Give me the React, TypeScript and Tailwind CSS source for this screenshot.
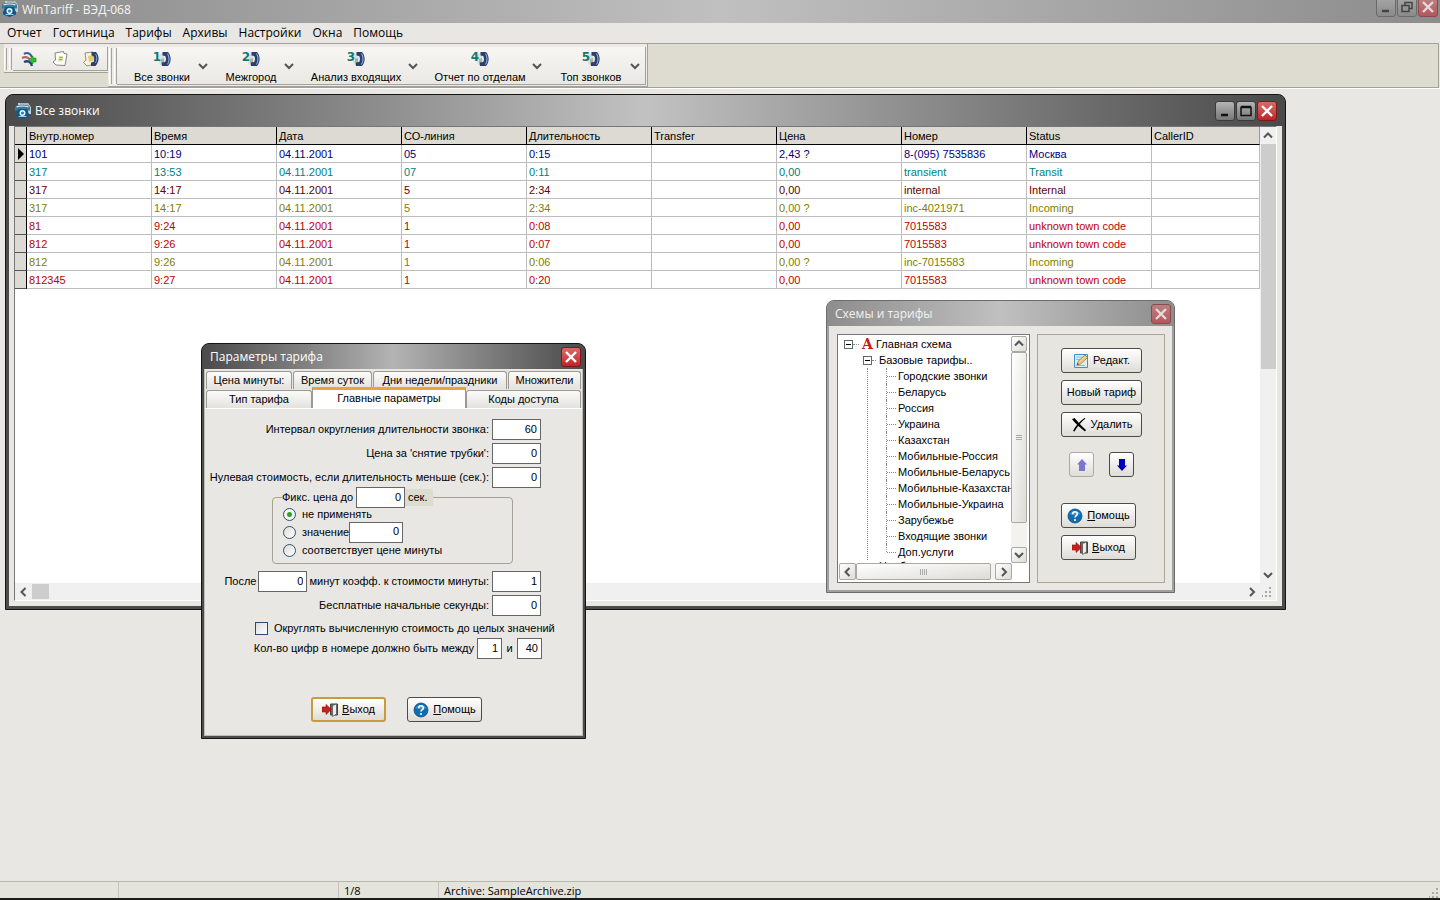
import { useState, type ReactNode } from "react";
import clsx from "clsx";

type Call = {
  color: string;
  cells: string[];
};

const menuItems = ["Отчет", "Гостиница", "Тарифы", "Архивы", "Настройки", "Окна", "Помощь"];

const reports = [
  { label: "Все звонки", width: "w-[66px]" },
  { label: "Межгород", width: "w-[60px]" },
  { label: "Анализ входящих", width: "w-[98px]" },
  { label: "Отчет по отделам", width: "w-[98px]" },
  { label: "Топ звонков", width: "w-[72px]" },
];

const columns = [
  "Внутр.номер",
  "Время",
  "Дата",
  "СО-линия",
  "Длительность",
  "Transfer",
  "Цена",
  "Номер",
  "Status",
  "CallerID",
];

const calls: Call[] = [
  { color: "text-[#000080]", cells: ["101", "10:19", "04.11.2001", "05", "0:15", "", "2,43 ?", "8-(095) 7535836", "Москва", ""] },
  { color: "text-[#008080]", cells: ["317", "13:53", "04.11.2001", "07", "0:11", "", "0,00", "transient", "Transit", ""] },
  { color: "text-[#600000]", cells: ["317", "14:17", "04.11.2001", "5", "2:34", "", "0,00", "internal", "Internal", ""] },
  { color: "text-[#808000]", cells: ["317", "14:17", "04.11.2001", "5", "2:34", "", "0,00 ?", "inc-4021971", "Incoming", ""] },
  { color: "text-[#c00000]", cells: ["81", "9:24", "04.11.2001", "1", "0:08", "", "0,00", "7015583", "unknown town code", ""] },
  { color: "text-[#c00000]", cells: ["812", "9:26", "04.11.2001", "1", "0:07", "", "0,00", "7015583", "unknown town code", ""] },
  { color: "text-[#808000]", cells: ["812", "9:26", "04.11.2001", "1", "0:06", "", "0,00 ?", "inc-7015583", "Incoming", ""] },
  { color: "text-[#c00000]", cells: ["812345", "9:27", "04.11.2001", "1", "0:20", "", "0,00", "7015583", "unknown town code", ""] },
];

const tariffs = [
  "Городские звонки",
  "Беларусь",
  "Россия",
  "Украина",
  "Казахстан",
  "Мобильные-Россия",
  "Мобильные-Беларусь",
  "Мобильные-Казахстан",
  "Мобильные-Украина",
  "Зарубежье",
  "Входящие звонки",
  "Доп.услуги",
];

/* ---------- icons ---------- */

function PhoneIcon() {
  return (
    <svg width="16" height="16" viewBox="0 0 16 16" aria-hidden="true">
      <path d="M3 0h10l3 4v7h-3V6H3z" fill="#c4cdd2" />
      <path d="M5 .8h7l2.500 3" stroke="#8f9ba2" strokeWidth=".8" fill="none" />
      <path d="M0 5c0-2.500 3-3.200 7.500-3.200S15 2.500 15 5v2.500h-4V6H4v1.500H0z" fill="#2b7ba6" />
      <path d="M1.500 4C4 2.600 11 2.600 13.500 4" stroke="#e2f4fb" strokeWidth="1.100" fill="none" />
      <path d="M3.500 6h8L14 11v2.500L7.500 16 1 13.500V11z" fill="#155488" />
      <circle cx="7.500" cy="10" r="3" fill="#e6f5fb" />
      <circle cx="7.500" cy="10" r="1.500" fill="#2f7ea8" />
      <path d="M3.500 13.500h8" stroke="#8fd0ea" />
    </svg>
  );
}

function RouteIcon() {
  return (
    <svg width="16" height="16" viewBox="0 0 16 16" aria-hidden="true">
      <path d="M3 3c3-2 6-1 8 3" stroke="#3c5f96" strokeWidth="2.200" fill="none" />
      <path d="M1 7c4-2 6-1 8 2" stroke="#b2685d" strokeWidth="2.200" fill="none" />
      <path d="M3 11c4-2 7 0 8 4" stroke="#27417c" strokeWidth="2.400" fill="none" />
      <path d="M8 8.500l4-3.500v2h3v4h-3v2z" fill="#2fbf2a" stroke="#16851a" strokeWidth=".6" />
    </svg>
  );
}

function NoteIcon() {
  return (
    <svg width="16" height="16" viewBox="0 0 16 16" aria-hidden="true">
      <path d="M3 2l8.500-1.500.5 2 3 .5-2 11.500-9-.5-3-3L3.500 9z" fill="#fdfdfa" stroke="#777" strokeWidth=".9" />
      <path d="M7 5h4v5l-5 1z" fill="#dce3a4" />
      <path d="M7.500 6.500h3M7 8.500h3" stroke="#8e9a4b" strokeWidth=".8" />
    </svg>
  );
}

function NotePhoneIcon() {
  return (
    <svg width="16" height="16" viewBox="0 0 16 16" aria-hidden="true">
      <path d="M2 2l8-1 2 12-8 2-3.500-3.500L3 9z" fill="#f8f3dd" stroke="#8c8468" strokeWidth=".9" />
      <path d="M5 5l5-1v6l-4 1z" fill="#e2c976" />
      <path d="M8.500 1H13c3.500 4 3.500 10-.5 14H8v-3.500l2.500-.5c1-2 1-4 0-6l-2-.5z" fill="#2b406f" />
      <path d="M12.500 3c1.700 2 1.700 6 0 9" stroke="#8aa7d8" fill="none" />
    </svg>
  );
}

function HandsetIcon() {
  return (
    <svg width="12" height="16" viewBox="0 0 12 16" aria-hidden="true">
      <path d="M0 4l5-3 1 12-3.500 2L0 12z" fill="#d8dfe6" />
      <path d="M2 8l3-1v6l-3 1z" fill="#a9b59a" />
      <path d="M3.500 1H9c3.500 4 3.500 10 0 14H3v-3.500l3.200-.5c1-2 1-4 0-6l-2.700-.5z" fill="#2b3f6b" />
      <path d="M8.500 2.500c2 3 2 8 0 11" stroke="#86a8da" strokeWidth="1.200" fill="none" />
    </svg>
  );
}

function HelpIcon() {
  return (
    <svg width="16" height="16" viewBox="0 0 16 16" aria-hidden="true">
      <circle cx="8" cy="8" r="7" fill="#0f6cb0" stroke="#0b4f86" strokeWidth=".8" />
      <path d="M2.500 6a6 5 0 0 1 11 0c-3 1.500-8 1.500-11 0z" fill="#4ea5dc" opacity=".7" />
      <path d="M5.700 6.200C5.700 3 10.400 3.100 10.400 5.900 10.400 7.600 8 7.700 8 9.600" stroke="#fff" strokeWidth="1.600" fill="none" />
      <circle cx="8" cy="12" r="1.100" fill="#fff" />
    </svg>
  );
}

function ExitIcon() {
  return (
    <svg width="16" height="14" viewBox="0 0 16 14" aria-hidden="true">
      <path d="M8.500 1h7v11h-7z" fill="#6d6d6d" stroke="#444" />
      <path d="M10.500 2.500l4-1.500v10l-4 2.500z" fill="#ececec" stroke="#555" strokeWidth=".8" />
      <path d="M0 4h4V1.500l5.500 5L4 11.500V9H0z" fill="#c9201c" stroke="#8b1210" strokeWidth=".6" />
    </svg>
  );
}

function EditIcon() {
  return (
    <svg width="16" height="16" viewBox="0 0 16 16" aria-hidden="true">
      <path d="M1.500 1.500h13v13h-13z" fill="#d9edfb" stroke="#3e8fd0" />
      <path d="M3 4h6M3 6.500h4M3 12.500h9" stroke="#8fbde0" />
      <path d="M4 12l1-3.500L12 2l2.500 2.500L7.500 11z" fill="#ecd08a" stroke="#8f7436" strokeWidth=".8" />
      <path d="M4 12l.6-2 1.400 1.300z" fill="#514429" />
    </svg>
  );
}

function DeleteIcon() {
  return (
    <svg width="16" height="14" viewBox="0 0 16 14" aria-hidden="true">
      <path d="M1 1.200L3.500 0C7 4 11 8.500 15 12l-1 1.500C9.500 10 5 6 1 1.200z" fill="#000" />
      <path d="M14.500.5C10 4 6.500 8.500 3.500 13.500L2 13C4.500 8 8.500 3.500 13.500 0z" fill="#000" />
    </svg>
  );
}

function ArrowIcon({ down }: { down?: boolean }) {
  return (
    <svg width="12" height="12" viewBox="0 0 12 12" className={down ? "rotate-180" : ""} aria-hidden="true">
      <path d="M6 0l5 5.500H9V12H3V5.500H1z" fill={down ? "#0000b4" : "#7d76cf"} />
    </svg>
  );
}

const chevrons = {
  up: "M1 6.500L5 2.500l4 4",
  down: "M1 3l4 4 4-4",
  left: "M6.500 1l-4 4 4 4",
  right: "M3 1l4 4-4 4",
};

function Chevron({ dir }: { dir: keyof typeof chevrons }) {
  return (
    <svg width="10" height="10" viewBox="0 0 10 10" aria-hidden="true">
      <path d={chevrons[dir]} stroke="#555" strokeWidth="2" fill="none" />
    </svg>
  );
}

function ResizeGrip() {
  return (
    <svg width="10" height="10" viewBox="0 0 10 10" fill="#aaa9a4" aria-hidden="true">
      <path d="M7 0h2v2H7zM7 4h2v2H7zM3 4h2v2H3zM7 8h2v2H7zM3 8h2v2H3zM0 8h1v2H0z" />
    </svg>
  );
}

/* ---------- window parts ---------- */

function CaptionButton({ kind, dim }: { kind: "min" | "max" | "restore" | "close"; dim?: boolean }) {
  const close = kind === "close";
  return (
    <button
      aria-label={kind}
      className={clsx(
        "flex h-5 w-5 items-center justify-center rounded-[3px] border",
        close && !dim && "border-[#7c1a1a] bg-linear-to-b from-[#d86a6a] to-[#c02026]",
        close && dim && "border-[#8b4a4c] bg-linear-to-b from-[#b98284] to-[#b3575b]",
        !close && !dim && "border-[#3a3a3a] bg-linear-to-b from-[#b4b4b4] to-[#777]",
        !close && dim && "border-[#6a6a6a] bg-linear-to-b from-[#a6a6a6] to-[#8a8a8a]"
      )}
    >
      <svg width="14" height="14" viewBox="0 0 14 14" fill="none" aria-hidden="true">
        {kind === "min" && <path d="M3 11h7" stroke={dim ? "#444" : "#111"} strokeWidth="2.500" />}
        {kind === "max" && <path d="M2 3.500h10v8H2zM2 2.500h10" stroke="#111" strokeWidth="1.500" />}
        {kind === "restore" && <path d="M2 5.500h7v6H2zM5 5V2.500h7v6H9" stroke="#444" strokeWidth="1.500" />}
        {close && <path d="M2 2l10 10M12 2L2 12" stroke={dim ? "#e8d8d8" : "#fff"} strokeWidth="2.400" />}
      </svg>
    </button>
  );
}

function XpButton({ children, className }: { children: ReactNode; className?: string }) {
  return (
    <button
      className={clsx(
        "flex h-[25px] items-center justify-center rounded-[3px] border bg-linear-to-b from-white to-[#dedcd6] whitespace-nowrap",
        className
      )}
    >
      {children}
    </button>
  );
}

function NumberBox({ label, value, className }: { label: string; value: string; className?: string }) {
  return (
    <input
      aria-label={label}
      defaultValue={value}
      className={clsx("h-[21px] shrink-0 border border-[#666] bg-white pr-[3px] pb-[2px] text-right outline-none", className)}
    />
  );
}

/* ---------- main frame ---------- */

function Grip() {
  return (
    <div className="flex w-2 shrink-0 justify-between py-px">
      <div className="w-[3px] border-r border-l border-r-[#a5a39b] border-l-white" />
      <div className="w-[3px] border-r border-l border-r-[#a5a39b] border-l-white" />
    </div>
  );
}

function Toolbars() {
  return (
    <div className="mr-px flex h-[45px] border-t border-r border-b border-[#a3a198] bg-[#dedbd0]">
      <div className="ml-1 flex h-[29px] w-[104px] gap-px border-b border-[#a3a198] bg-[#ecebe7] pt-[3px] pb-px">
        <Grip />
        <div className="flex flex-1 justify-around border-r border-b border-[#a3a198] bg-linear-to-b from-[#f5f4f1] to-[#e9e8e4]">
          {[<RouteIcon />, <NoteIcon />, <NotePhoneIcon />].map((icon, i) => (
            <button key={i} aria-label={`Инструмент ${i + 1}`} className="flex w-7 items-center justify-center">
              {icon}
            </button>
          ))}
        </div>
      </div>
      <div className="flex border-r border-b border-[#a3a198] bg-[#ecebe7] pt-[3px] pr-px pb-px pl-px">
        <Grip />
        <div className="flex gap-[10px] border-r border-b border-[#a3a198] bg-linear-to-b from-[#f7f6f3] to-[#e9e8e4] pr-[2px] pl-3">
          {reports.map((r, i) => (
            <div key={r.label} className="flex">
              <button className={clsx("flex flex-col items-center justify-center gap-[3px] pt-[3px]", r.width)}>
                <span className="flex h-4 items-center">
                  <b className="z-10 -mr-[2px] self-start font-['DejaVu_Sans'] text-[12px] leading-[12px] text-[#117a70]">
                    {i + 1}
                  </b>
                  <HandsetIcon />
                </span>
                <span className="leading-[14px] whitespace-nowrap">{r.label}</span>
              </button>
              <button aria-label={`${r.label}: меню`} className="flex w-4 items-center justify-center">
                <Chevron dir="down" />
              </button>
            </div>
          ))}
        </div>
      </div>
    </div>
  );
}

/* ---------- calls window ---------- */

function CallsTable() {
  return (
    <table className="w-full table-fixed border-separate border-spacing-0 bg-white text-left">
      <colgroup>
        <col className="w-3" />
        {columns.slice(0, -1).map((c) => (
          <col key={c} className="w-[125px]" />
        ))}
        <col />
      </colgroup>
      <thead>
        <tr className="h-[18px] bg-[#dddad3]">
          <th className="border-r border-b border-black p-0" aria-label="Текущая строка" />
          {columns.map((c) => (
            <th key={c} className="border-r border-b border-black p-0 pl-[2px] leading-[16px] font-normal last:border-r-[#999]">
              {c}
            </th>
          ))}
        </tr>
      </thead>
      <tbody>
        {calls.map((call, i) => (
          <tr key={i} className={clsx("h-[18px]", call.color)}>
            <td className="border-r border-b border-r-black border-b-[#555] bg-[#dddad3] p-0">
              {i === 0 && (
                <svg width="8" height="12" viewBox="0 0 8 12" className="ml-[2px]" aria-hidden="true">
                  <path d="M1 0l6 6-6 6z" fill="#000" />
                </svg>
              )}
            </td>
            {call.cells.map((cell, j) => (
              <td key={j} className="border-r border-b border-[#bdbdbd] p-0 pl-[2px] leading-[16px] whitespace-nowrap">
                {cell}
              </td>
            ))}
          </tr>
        ))}
      </tbody>
    </table>
  );
}

function CallsWindow() {
  return (
    <section className="absolute top-[5px] left-[5px] flex h-[516px] w-[1281px] flex-col rounded-t-lg border border-[#151515] bg-[#4c4c4c]">
      <header className="flex h-[31px] shrink-0 items-center rounded-t-lg bg-linear-to-r from-[#4a4a4a] via-[#c2c2c2] to-[#4a4a4a] pr-2 pl-[9px]">
        <PhoneIcon />
        <h2 className="ml-1 flex-1 font-['Open_Sans',sans-serif] text-[12px] text-white">Все звонки</h2>
        <div className="flex gap-px">
          <CaptionButton kind="min" />
          <CaptionButton kind="max" />
          <CaptionButton kind="close" />
        </div>
      </header>
      <div className="mx-[3px] mb-[3px] flex min-h-0 flex-1 bg-[#e8e7e2] px-[5px] pb-[5px]">
        <div className="flex flex-1 flex-col border-t border-r border-b border-l border-t-[#777] border-r-white border-b-white border-l-[#777] bg-white">
          <div className="flex min-h-0 flex-1">
            <div className="flex-1">
              <CallsTable />
            </div>
            <div className="flex w-4 flex-col items-center bg-[#f0f0f0]">
              <button aria-label="Вверх" className="flex h-[17px] items-center">
                <Chevron dir="up" />
              </button>
              <div className="h-[225px] w-[15px] bg-[#cdcdcd]" />
              <div className="flex-1" />
              <button aria-label="Вниз" className="flex h-[17px] items-center">
                <Chevron dir="down" />
              </button>
            </div>
          </div>
          <div className="flex h-[17px] items-center bg-[#f0f0f0]">
            <button aria-label="Влево" className="flex w-[17px] justify-center">
              <Chevron dir="left" />
            </button>
            <div className="h-[15px] w-[17px] bg-[#cdcdcd]" />
            <div className="flex-1" />
            <button aria-label="Вправо" className="flex w-[17px] justify-center">
              <Chevron dir="right" />
            </button>
            <div className="flex w-4 justify-end pr-1">
              <ResizeGrip />
            </div>
          </div>
        </div>
      </div>
    </section>
  );
}

/* ---------- tariff parameters dialog ---------- */

function Tab({ label, className }: { label: string; className: string }) {
  return (
    <button
      role="tab"
      className={clsx(
        "rounded-t-[3px] border border-b-0 border-[#9a9992] bg-linear-to-b from-[#fbfbfa] to-[#e3e2dd] whitespace-nowrap",
        className
      )}
    >
      {label}
    </button>
  );
}

function Field({ label, value }: { label: string; value: string }) {
  return (
    <div className="flex items-center justify-end gap-[3px]">
      <span className="whitespace-nowrap">{label}</span>
      <NumberBox label={label} value={value} className="w-[49px]" />
    </div>
  );
}

function Radio({ label, checked, onSelect }: { label: string; checked: boolean; onSelect: () => void }) {
  return (
    <label className="flex items-center gap-[6px] whitespace-nowrap">
      <input
        type="radio"
        name="fixed-price"
        checked={checked}
        onChange={onSelect}
        className="h-[13px] w-[13px] appearance-none rounded-full border border-[#33536b] bg-linear-to-br from-[#dcdcd7] to-white checked:bg-[radial-gradient(circle,#2aa52a_2px,#f2f4f0_3px)]"
      />
      {label}
    </label>
  );
}

function ParametersDialog() {
  const [mode, setMode] = useState("не применять");

  return (
    <section className="absolute top-[254px] left-[201px] flex h-[396px] w-[385px] flex-col rounded-t-lg border border-[#151515] bg-[#4c4c4c]">
      <header className="flex h-[25px] shrink-0 items-center justify-between rounded-t-lg bg-linear-to-r from-[#4a4a4a] via-[#b4b4b4] to-[#4a4a4a] pr-1 pl-2">
        <h2 className="font-['Open_Sans',sans-serif] text-[12px] text-white">Параметры тарифа</h2>
        <CaptionButton kind="close" />
      </header>
      <div className="mx-[2px] mb-[2px] flex flex-1 flex-col border border-t-0 border-[#bdbcb7] bg-[#e8e7e4] pt-[2px]">
        <div role="tablist" className="px-px">
          <div className="flex h-[18px] gap-px">
            <Tab label="Цена минуты:" className="w-[86px]" />
            <Tab label="Время суток" className="w-[79px]" />
            <Tab label="Дни недели/праздники" className="w-[134px]" />
            <Tab label="Множители" className="flex-1" />
          </div>
          <div className="flex h-[19px] items-end">
            <Tab label="Тип тарифа" className="h-[18px] w-[106px]" />
            <button
              role="tab"
              aria-selected="true"
              className="-mt-[2px] h-[21px] w-[154px] self-end border-x border-t-[3px] border-x-[#9a9992] border-t-[#e8a33d] bg-white pb-[2px] leading-[14px]"
            >
              Главные параметры
            </button>
            <Tab label="Коды доступа" className="h-[18px] flex-1" />
          </div>
        </div>
        <form className="flex flex-1 flex-col border-t border-white pt-[10px]" onSubmit={(e) => e.preventDefault()}>
          <div className="flex flex-col gap-[3px] pr-[41px]">
            <Field label="Интервал округления длительности звонка:" value="60" />
            <Field label="Цена за 'снятие трубки':" value="0" />
            <Field label="Нулевая стоимость, если длительность меньше (сек.):" value="0" />
          </div>
          <fieldset className="-mt-px mr-[69px] ml-[67px] h-[77px] rounded-[4px] border border-[#a3a198] pl-[10px]">
            <legend className="-ml-px flex items-center">
              <span className="w-[74px] whitespace-nowrap">Фикс. цена до</span>
              <NumberBox label="Фикс. цена до, сек." value="0" className="w-[49px]" />
              <span className="w-[28px] bg-[#dedbd0] pl-[3px]">сек.</span>
            </legend>
            <div className="-mt-[3px]">
              <div className="flex h-[18px] items-center">
                <Radio label="не применять" checked={mode === "не применять"} onSelect={() => setMode("не применять")} />
              </div>
              <div className="flex h-[18px] items-center">
                <Radio label="значение" checked={mode === "значение"} onSelect={() => setMode("значение")} />
                <NumberBox label="Значение" value="0" className="w-[54px]" />
              </div>
              <div className="flex h-[18px] items-center">
                <Radio
                  label="соответствует цене минуты"
                  checked={mode === "цена минуты"}
                  onSelect={() => setMode("цена минуты")}
                />
              </div>
            </div>
          </fieldset>
          <div className="mt-[7px] flex flex-col gap-[3px] pr-[41px]">
            <div className="flex items-center justify-end gap-[2px] whitespace-nowrap">
              <span>После</span>
              <NumberBox label="После минут" value="0" className="w-[49px]" />
              <Field label="минут коэфф. к стоимости минуты:" value="1" />
            </div>
            <Field label="Бесплатные начальные секунды:" value="0" />
          </div>
          <label className="mt-[5px] flex h-[15px] items-center gap-[6px] pl-[50px] whitespace-nowrap">
            <input
              type="checkbox"
              className="h-[13px] w-[13px] appearance-none border border-[#2a4a6b] bg-linear-to-br from-[#dcdcd7] to-white"
            />
            Округлять вычисленную стоимость до целых значений
          </label>
          <div className="mt-[2px] flex items-center justify-end pr-10 whitespace-nowrap">
            <span className="mr-[3px]">Кол-во цифр в номере должно быть между</span>
            <NumberBox label="Минимум цифр" value="1" className="w-[25px]" />
            <span className="w-[15px] text-center">и</span>
            <NumberBox label="Максимум цифр" value="40" className="w-[25px]" />
          </div>
          <div className="mt-[38px] flex justify-center gap-[21px] pl-[6px]">
            <XpButton className="w-[75px] gap-1 border-2 border-[#c99a3e]">
              <ExitIcon />
              <span>
                <u>В</u>ыход
              </span>
            </XpButton>
            <XpButton className="w-[75px] gap-1 border-[#4c4c4c]">
              <HelpIcon />
              <span>
                <u>П</u>омощь
              </span>
            </XpButton>
          </div>
        </form>
      </div>
    </section>
  );
}

/* ---------- schemes dialog ---------- */

function Toggle() {
  return (
    <button aria-label="Свернуть" className="flex h-[9px] w-[9px] shrink-0 items-center justify-center border border-[#666] bg-white">
      <span className="h-px w-[5px] bg-black" />
    </button>
  );
}

function SchemeTree() {
  return (
    <ul className="h-[227px] w-[172px] overflow-hidden pl-[5px] leading-4 whitespace-nowrap">
      <li>
        <div className="flex h-4 items-center">
          <Toggle />
          <span className="w-[6px] border-t border-dotted border-[#888]" />
          <b className="w-[17px] text-center font-['DejaVu_Serif',serif] text-[14px] leading-4 text-[#d11616]">А</b>
          Главная схема
        </div>
        <ul className="pl-[19px]">
          <li>
            <div className="flex h-4 items-center">
              <Toggle />
              <span className="mr-[3px] w-1 border-t border-dotted border-[#888]" />
              Базовые тарифы..
            </div>
            <ul className="ml-1 border-l border-dotted border-[#888] pl-[18px]">
              {tariffs.map((t, i) => (
                <li key={t} className="flex h-4">
                  <span
                    className={clsx("w-px shrink-0 border-l border-dotted border-[#888]", i === tariffs.length - 1 ? "h-2" : "h-4")}
                  />
                  <span className="mt-2 mr-[2px] w-[9px] shrink-0 border-t border-dotted border-[#888]" />
                  {t}
                </li>
              ))}
            </ul>
          </li>
          <li className="pl-4 leading-3">Надбавки</li>
        </ul>
      </li>
    </ul>
  );
}

const scrollPart = "flex items-center justify-center rounded-[2px] border border-[#aaa9a2] bg-linear-to-br from-white to-[#dddcd6]";

function SchemesDialog() {
  return (
    <section className="absolute top-[211px] left-[826px] flex h-[293px] w-[349px] flex-col rounded-t-lg border border-[#6c6c6c] bg-[#a0a0a0]">
      <header className="flex h-[25px] shrink-0 items-center justify-between rounded-t-lg bg-linear-to-r from-[#8d8d8d] via-[#c0c0c0] to-[#8d8d8d] pr-[3px] pl-2">
        <h2 className="font-['Open_Sans',sans-serif] text-[12px] text-[#f2f2f2]">Схемы и тарифы</h2>
        <CaptionButton kind="close" dim />
      </header>
      <div className="mx-[2px] mb-[2px] flex flex-1 gap-[7px] bg-[#e8e7e4] pt-2 pr-[7px] pb-[7px] pl-2">
        <div className="flex w-[193px] flex-col border border-[#777] bg-white p-px">
          <div className="flex">
            <SchemeTree />
            <div className="flex w-4 flex-col bg-[#f3f2ee]">
              <button aria-label="Вверх" className={clsx("h-4", scrollPart)}>
                <Chevron dir="up" />
              </button>
              <div className={clsx("h-[171px] flex-col gap-px", scrollPart)}>
                <i className="h-px w-[6px] bg-[#aaa]" />
                <i className="h-px w-[6px] bg-[#aaa]" />
                <i className="h-px w-[6px] bg-[#aaa]" />
              </div>
              <div className="flex-1" />
              <button aria-label="Вниз" className={clsx("h-4", scrollPart)}>
                <Chevron dir="down" />
              </button>
            </div>
          </div>
          <div className="flex h-[17px] w-[173px] bg-[#f3f2ee]">
            <button aria-label="Влево" className={clsx("w-[17px]", scrollPart)}>
              <Chevron dir="left" />
            </button>
            <div className={clsx("w-[135px] gap-px", scrollPart)}>
              <i className="h-[6px] w-px bg-[#aaa]" />
              <i className="h-[6px] w-px bg-[#aaa]" />
              <i className="h-[6px] w-px bg-[#aaa]" />
              <i className="h-[6px] w-px bg-[#aaa]" />
            </div>
            <div className="flex-1" />
            <button aria-label="Вправо" className={clsx("w-[17px]", scrollPart)}>
              <Chevron dir="right" />
            </button>
          </div>
        </div>
        <div className="flex flex-1 flex-col border border-[#aaa79a] bg-[#e6e5e0] pt-[13px] pl-[23px]">
          <div className="flex flex-col gap-[7px]">
            <XpButton className="w-[81px] gap-1 border-[#4c4c4c]">
              <EditIcon />
              Редакт.
            </XpButton>
            <XpButton className="w-[81px] border-[#4c4c4c]">Новый тариф</XpButton>
            <XpButton className="w-[81px] gap-1 border-[#4c4c4c]">
              <DeleteIcon />
              Удалить
            </XpButton>
          </div>
          <div className="mt-[15px] flex gap-[15px] pl-2">
            <XpButton className="w-[25px] border-[#aaa]">
              <ArrowIcon />
            </XpButton>
            <XpButton className="w-[25px] border-[#4c4c4c]">
              <ArrowIcon down />
            </XpButton>
          </div>
          <div className="mt-[26px] flex flex-col gap-[7px]">
            <XpButton className="w-[75px] gap-1 border-[#4c4c4c]">
              <HelpIcon />
              <span>
                <u>П</u>омощь
              </span>
            </XpButton>
            <XpButton className="w-[75px] gap-1 border-[#4c4c4c]">
              <ExitIcon />
              <span>
                <u>В</u>ыход
              </span>
            </XpButton>
          </div>
        </div>
      </div>
    </section>
  );
}

export default function App() {
  return (
    <div className="flex min-h-screen flex-col overflow-hidden bg-[#e8e7e4] font-['Liberation_Sans',Arial,sans-serif] text-[11px] text-black">
      <header className="flex h-[23px] items-start bg-linear-to-r from-[#8c8c8c] via-[#c0c0c0] to-[#8c8c8c] pl-[2px]">
        <div className="mt-px">
          <PhoneIcon />
        </div>
        <h1 className="mt-px ml-1 flex-1 font-['Open_Sans',sans-serif] text-[12px] leading-[17px] text-[#f4f4f4]">WinTariff - ВЭД-068</h1>
        <div className="-mt-[3px] mr-[2px] flex gap-px">
          <CaptionButton kind="min" dim />
          <CaptionButton kind="restore" dim />
          <CaptionButton kind="close" dim />
        </div>
      </header>
      <nav className="flex h-5 items-center gap-[11px] pl-[7px] font-['Open_Sans',sans-serif] text-[12px]">
        {menuItems.map((m) => (
          <button key={m}>{m}</button>
        ))}
      </nav>
      <Toolbars />
      <main className="relative flex-1 border-t border-white">
        <CallsWindow />
        <ParametersDialog />
        <SchemesDialog />
      </main>
      <footer className="flex h-[19px] items-stretch border-t border-b-2 border-[#b7b6ad] border-b-[#1c1c1c] bg-[#e5e4dc] font-['Open_Sans',sans-serif] text-[11px] leading-[17px]">
        <div className="w-[119px] border-r border-[#c4c3ba]" />
        <div className="w-[220px] border-r border-[#c4c3ba]" />
        <div className="w-[100px] border-r border-[#c4c3ba] pl-[5px]">1/8</div>
        <div className="flex-1 pl-[5px]">Archive: SampleArchive.zip</div>
        <div className="flex items-end pr-px">
          <ResizeGrip />
        </div>
      </footer>
    </div>
  );
}
